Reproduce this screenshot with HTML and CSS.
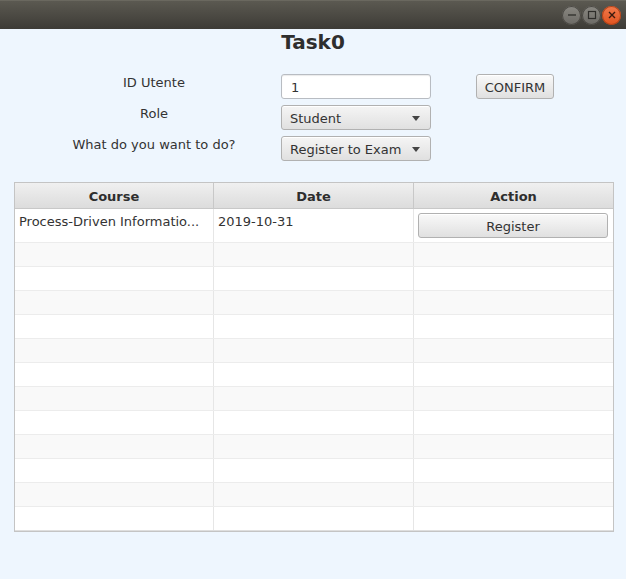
FILE: index.html
```html
<!DOCTYPE html>
<html>
<head>
<meta charset="utf-8">
<link rel="stylesheet" href="styles.css">
</head>
<body>
<div class="titlebar">
  <div class="wm-buttons">
    <span class="wm-btn wm-min"><svg width="18" height="18" viewBox="0 0 18 18"><line x1="5" y1="9" x2="13" y2="9" stroke="#2e2d2a" stroke-width="1.3"/></svg></span>
    <span class="wm-btn wm-max"><svg width="18" height="18" viewBox="0 0 18 18"><rect x="5.5" y="5.5" width="7" height="7" fill="none" stroke="#2e2d2a" stroke-width="1.2"/></svg></span>
    <span class="wm-btn wm-close"><svg width="18" height="18" viewBox="0 0 18 18"><path d="M6 6 L12 12 M12 6 L6 12" stroke="#3a1a0e" stroke-width="1.4"/></svg></span>
  </div>
</div>
<main class="content">
  <h1 class="app-title">Task0</h1>
  <div class="form">
    <label class="form-label">ID Utente</label>
    <div class="textfield">1</div>
    <button class="btn confirm">CONFIRM</button>

    <label class="form-label">Role</label>
    <div class="combo"><span>Student</span><span class="arrow"></span></div>
    <span></span>

    <label class="form-label">What do you want to do?</label>
    <div class="combo"><span>Register to Exam</span><span class="arrow"></span></div>
    <span></span>
  </div>

  <div class="table">
    <div class="thead">
      <div class="th">Course</div>
      <div class="th">Date</div>
      <div class="th">Action</div>
    </div>
    <div class="row first">
      <div class="td">Process-Driven Informatio...</div>
      <div class="td">2019-10-31</div>
      <div class="td action"><button class="btn register">Register</button></div>
    </div>
    <div class="row odd"><div class="td"></div><div class="td"></div><div class="td"></div></div>
    <div class="row"><div class="td"></div><div class="td"></div><div class="td"></div></div>
    <div class="row odd"><div class="td"></div><div class="td"></div><div class="td"></div></div>
    <div class="row"><div class="td"></div><div class="td"></div><div class="td"></div></div>
    <div class="row odd"><div class="td"></div><div class="td"></div><div class="td"></div></div>
    <div class="row"><div class="td"></div><div class="td"></div><div class="td"></div></div>
    <div class="row odd"><div class="td"></div><div class="td"></div><div class="td"></div></div>
    <div class="row"><div class="td"></div><div class="td"></div><div class="td"></div></div>
    <div class="row odd"><div class="td"></div><div class="td"></div><div class="td"></div></div>
    <div class="row"><div class="td"></div><div class="td"></div><div class="td"></div></div>
    <div class="row odd"><div class="td"></div><div class="td"></div><div class="td"></div></div>
    <div class="row"><div class="td"></div><div class="td"></div><div class="td"></div></div>
  </div>
</main>
</body>
</html>
```

FILE: styles.css
```css
* { box-sizing: border-box; }
html, body { margin: 0; padding: 0; }
body {
  width: 626px;
  height: 579px;
  overflow: hidden;
  background: #eef6fe;
  font-family: "DejaVu Sans", "Liberation Sans", sans-serif;
  font-size: 13px;
  color: #333333;
}
.titlebar {
  height: 29px;
  background: linear-gradient(#5b5951, #3d3b36);
  border-top: 1px solid #6a685f;
  display: flex;
  justify-content: flex-end;
  align-items: center;
  padding-right: 5px;
}
.wm-buttons { display: flex; gap: 1px; }
.wm-btn {
  width: 19px;
  height: 19px;
  border-radius: 50%;
  display: flex;
  align-items: center;
  justify-content: center;
  background: linear-gradient(#8a8882, #6b6964);
  box-shadow: inset 0 0 0 1px #4a4843;
}
.wm-close {
  background: linear-gradient(#f27a4c, #e0531f);
  box-shadow: inset 0 0 0 1px #b0431a;
}
.content { padding: 1px 0 0 0; }
.app-title {
  margin: 0;
  height: 24px;
  line-height: 24px;
  font-size: 20px;
  font-weight: bold;
  text-align: center;
  color: #2e2e2e;
}
.form {
  margin-top: 20px;
  padding-left: 60px;
  display: grid;
  grid-template-columns: 188px 150px 78px;
  grid-auto-rows: 25px;
  column-gap: 33px;
  row-gap: 6px;
}
.form-label {
  text-align: center;
  line-height: 17px;
  align-self: start;
}
.textfield {
  height: 25px;
  border: 1px solid #b8bcc2;
  border-radius: 3px;
  background: #ffffff;
  padding: 1px 9px 0 9px;
  line-height: 23px;
  box-shadow: inset 0 1px 1px #eaeaea;
}
.btn {
  font-family: "DejaVu Sans", "Liberation Sans", sans-serif;
  font-size: 13px;
  color: #333333;
  height: 25px;
  border: 1px solid #b1b1b1;
  border-radius: 3px;
  background: linear-gradient(#f9f9f9, #e0e0e0);
  padding: 2px 0 0 0;
  box-shadow: inset 0 1px 0 #ffffff;
}
.confirm { margin-left: 12px; width: 78px; }
.combo {
  height: 25px;
  border: 1px solid #b1b1b1;
  border-radius: 3px;
  background: linear-gradient(#f5f5f5, #e0e0e0);
  box-shadow: inset 0 1px 0 #ffffff;
  display: flex;
  align-items: center;
  justify-content: space-between;
  padding: 2px 10px 0 8px;
}
.arrow {
  width: 0;
  height: 0;
  margin-top: -1px;
  border-left: 4.5px solid transparent;
  border-right: 4.5px solid transparent;
  border-top: 5px solid #444444;
}
.table {
  margin: 21px 0 0 14px;
  width: 600px;
  border: 1px solid #c4c4c4;
  background: #ffffff;
}
.thead {
  display: grid;
  grid-template-columns: 199px 200px 199px;
  height: 26px;
  background: linear-gradient(#f0f0f0, #dcdcdc);
  border-bottom: 1px solid #c8c8c8;
}
.th {
  font-weight: bold;
  text-align: center;
  line-height: 27px;
  border-right: 1px solid #c8c8c8;
  color: #2e2e2e;
}
.th:last-child { border-right: none; }
.row {
  display: grid;
  grid-template-columns: 199px 200px 199px;
  height: 24px;
  border-bottom: 1px solid #ececec;
  background: #ffffff;
}
.row.odd { background: #f9f9f9; }
.row.first { height: 34px; }
.row:last-child { border-bottom: 1px solid #dedede; }
.td {
  border-right: 1px solid #e6e6e6;
  padding: 4px 0 0 4px;
  line-height: 17px;
  white-space: nowrap;
  overflow: hidden;
}
.td:last-child { border-right: none; }
.td.action { padding: 4px 4px 0 4px; }
.register { width: 190px; height: 25px; }
```
